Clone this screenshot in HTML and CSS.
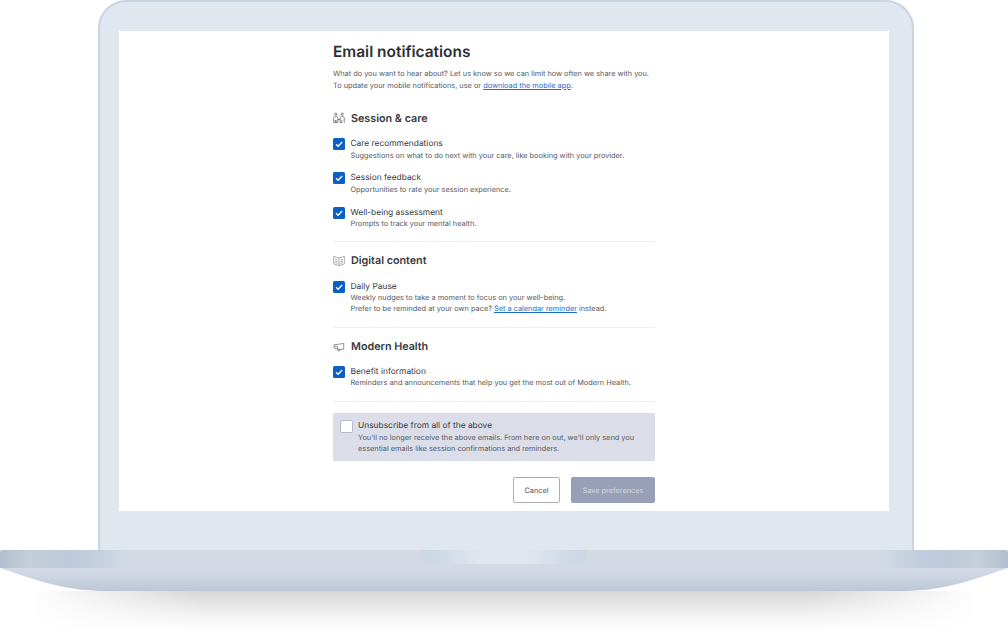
FILE: index.html
```html
<!DOCTYPE html>
<html lang="en">
<head>
<meta charset="utf-8">
<title>Email notifications</title>
<link rel="stylesheet" href="styles.css">
</head>
<body>
<div class="laptop">
  <div class="lid">
    <main class="screen">
      <div class="column">
        <h1 class="title">Email notifications</h1>
        <p class="intro">What do you want to hear about? Let us know so we can limit how often we share with you.<br>To update your mobile notifications, use or <a href="#">download the mobile app</a>.</p>

        <section class="group">
          <h2 class="group-title">
            <svg class="group-icon" viewBox="0 0 13 12" fill="none" stroke="#55595f" stroke-width=".8"><circle cx="3" cy="1.8" r="1.2"/><circle cx="10" cy="1.8" r="1.2"/><path d="M.8 11V6.2C.8 5 1.8 4.2 3 4.2S5.2 5 5.2 6.2V11H3.4V8.2M12.2 11V6.2C12.2 5 11.2 4.2 10 4.2S7.8 5 7.8 6.2V11h1.8V8.2M5.2 7.6h2.6M.8 11h1.8V8.2"/></svg>
            Session &amp; care
          </h2>
          <div class="option">
            <span class="check"><svg viewBox="0 0 12 12"><path d="M3 6.3l2.1 2L9.2 4" fill="none" stroke="#fff" stroke-width="1.3"/></svg></span>
            <div class="option-text"><div class="option-name">Care recommendations</div><div class="option-desc">Suggestions on what to do next with your care, like booking with your provider.</div></div>
          </div>
          <div class="option">
            <span class="check"><svg viewBox="0 0 12 12"><path d="M3 6.3l2.1 2L9.2 4" fill="none" stroke="#fff" stroke-width="1.3"/></svg></span>
            <div class="option-text"><div class="option-name">Session feedback</div><div class="option-desc">Opportunities to rate your session experience.</div></div>
          </div>
          <div class="option">
            <span class="check"><svg viewBox="0 0 12 12"><path d="M3 6.3l2.1 2L9.2 4" fill="none" stroke="#fff" stroke-width="1.3"/></svg></span>
            <div class="option-text"><div class="option-name">Well-being assessment</div><div class="option-desc">Prompts to track your mental health.</div></div>
          </div>
        </section>

        <section class="group">
          <h2 class="group-title">
            <svg class="group-icon" viewBox="0 0 13 12" fill="none" stroke="#7b8087" stroke-width=".7"><path d="M.7 1.2L6.5 2.6l5.8-1.4v8L6.5 11 .7 9.2zM6.5 2.6V11M2.3 4.2l2.6.7M2.3 6l2.6.7M2.3 7.8l2.6.7M10.7 4.2l-2.6.7M10.7 6l-2.6.7M10.7 7.8l-2.6.7"/></svg>
            Digital content
          </h2>
          <div class="option">
            <span class="check"><svg viewBox="0 0 12 12"><path d="M3 6.3l2.1 2L9.2 4" fill="none" stroke="#fff" stroke-width="1.3"/></svg></span>
            <div class="option-text"><div class="option-name">Daily Pause</div><div class="option-desc">Weekly nudges to take a moment to focus on your well-being.<br>Prefer to be reminded at your own pace? <a href="#">Set a calendar reminder</a> instead.</div></div>
          </div>
        </section>

        <section class="group">
          <h2 class="group-title">
            <svg class="group-icon" viewBox="0 0 13 12" fill="none" stroke="#6b7077" stroke-width=".8"><path d="M1.2 3.6L11.6 2.2v6.3H5.3L1.2 7zM1.2 5.2h3.6v3M5.3 8.5v1.6h2.2V8.5"/></svg>
            Modern Health
          </h2>
          <div class="option">
            <span class="check"><svg viewBox="0 0 12 12"><path d="M3 6.3l2.1 2L9.2 4" fill="none" stroke="#fff" stroke-width="1.3"/></svg></span>
            <div class="option-text"><div class="option-name">Benefit information</div><div class="option-desc">Reminders and announcements that help you get the most out of Modern Health.</div></div>
          </div>
        </section>

        <div class="unsubscribe">
          <span class="box"></span>
          <div class="option-text"><div class="option-name">Unsubscribe from all of the above</div><div class="option-desc">You'll no longer receive the above emails. From here on out, we'll only send you<br>essential emails like session confirmations and reminders.</div></div>
        </div>

        <div class="actions">
          <button class="btn btn-cancel" type="button">Cancel</button>
          <button class="btn btn-save" type="button">Save preferences</button>
        </div>
      </div>
    </main>
  </div>
  <div class="base">
    <div class="hinge"></div>
  </div>
  <div class="base-lower"></div>
  <div class="base-shadow"></div>
</div>
</body>
</html>
```
FILE: styles.css
```css
* { box-sizing: border-box; }
html, body { margin: 0; padding: 0; background: #fff; }
body { width: 1008px; height: 635px; overflow: hidden; font-family: Inter, "Liberation Sans", sans-serif; color: #4d5257; text-rendering: geometricPrecision; }
a { color: #1a6dcf; text-decoration: underline; }

.laptop { display: flex; flex-direction: column; width: 1008px; }

.lid {
  flex: none;
  width: 816px; height: 550px; margin-left: 98px;
  padding: 29px 23px 0 19px;
  background: #e0e7ef;
  border: 2px solid #c9d4e1; border-bottom: 0;
  border-radius: 28px 28px 0 0;
}
.screen { width: 770px; height: 480px; background: #fff; overflow: hidden; padding: 11px 0 0 214px; }
.column { width: 322px; }

.title { margin: 0; font-family: Inter, sans-serif; font-size: 15.45px; line-height: 20px; font-weight: 600; color: #2b2f33; }
.intro { margin: 6px 0 0; font-size: 7.35px; line-height: 12px; color: #54585e; }

.group { padding-bottom: 12px; border-bottom: 1px solid #eceef1; margin-bottom: 12px; }
.group:first-of-type { margin-top: 19px; padding-bottom: 11.4px; }
.group:last-of-type { margin-bottom: 11px; }
.group-title { display: flex; align-items: center; gap: 6px; margin: 0 0 14px; height: 14px; font-family: Inter, sans-serif; font-size: 10.75px; font-weight: 600; color: #35393e; }
.group:last-of-type .group-title { margin-bottom: 13px; }
.group-icon { width: 12px; height: 12px; flex: none; }

.option { display: flex; gap: 5.5px; margin-bottom: 12.8px; }
.option:last-child { margin-bottom: 0; padding-bottom: .5px; }
.check { flex: none; width: 12px; height: 12px; margin-top: -1px; border-radius: 1.5px; background: #0c5fc4; }
.check svg { display: block; width: 12px; height: 12px; }
.option-name { font-size: 8.4px; line-height: 10.5px; color: #33373c; }
.option-desc { font-size: 7.35px; line-height: 11px; color: #55595f; }

.unsubscribe { display: flex; gap: 5px; height: 48px; margin-top: 11px; padding: 7px 7px 0; background: #dbdee8; }
.unsubscribe .option-text { padding-top: 1.5px; }
.box { flex: none; width: 13px; height: 13px; background: #fff; border: 1px solid #b4b9ca; border-radius: 1.5px; }

.actions { display: flex; justify-content: flex-end; gap: 11px; margin-top: 16px; }
.btn { height: 26px; padding: 1px 0 0; font-family: Inter, sans-serif; font-size: 7.35px; border-radius: 2px; text-rendering: geometricPrecision; }
.btn-cancel { width: 47px; background: #fff; border: 1px solid #a9aebf; color: #4d5257; }
.btn-save { width: 84px; background: #989fb6; border: 0; color: #d5d8e2; }

.base {
  flex: none; height: 18px;
  border-radius: 2px 2px 0 0;
  background: linear-gradient(90deg, #b3bfcf 0, #c5cfd8 30px, #bdcadc 65px, #c3cfde 95px, #d3dae4 130px, #d3dae4 878px, #c3cfde 913px, #bdcadc 943px, #c5cfd8 978px, #b3bfcf 1008px);
}
.hinge {
  width: 168px; height: 14px; margin-left: 420px;
  border-radius: 0 0 11px 11px;
  background: linear-gradient(90deg, #cdd8e6 0, #cdd8e6 14px, #dfe6ee 60px, #dfe6ee 108px, #cdd8e6 154px, #cdd8e6 168px);
}
.base-lower {
  flex: none; height: 23px;
  clip-path: path("M0 0H1008C968 14 938 23 903 23H105C70 23 40 14 0 0Z");
  background: linear-gradient(180deg, #d3dae6 0, #cfd6e2 30%, #bcc7d6 100%);
}
.base-shadow {
  flex: none; height: 40px; margin: 0 30px;
  background: linear-gradient(180deg, #d6d6d6 0, #f0f0f0 55%, #fff 100%);
  -webkit-mask-image: linear-gradient(90deg, transparent 0, #000 18%, #000 82%, transparent 100%);
  mask-image: linear-gradient(90deg, transparent 0, #000 18%, #000 82%, transparent 100%);
}
```
